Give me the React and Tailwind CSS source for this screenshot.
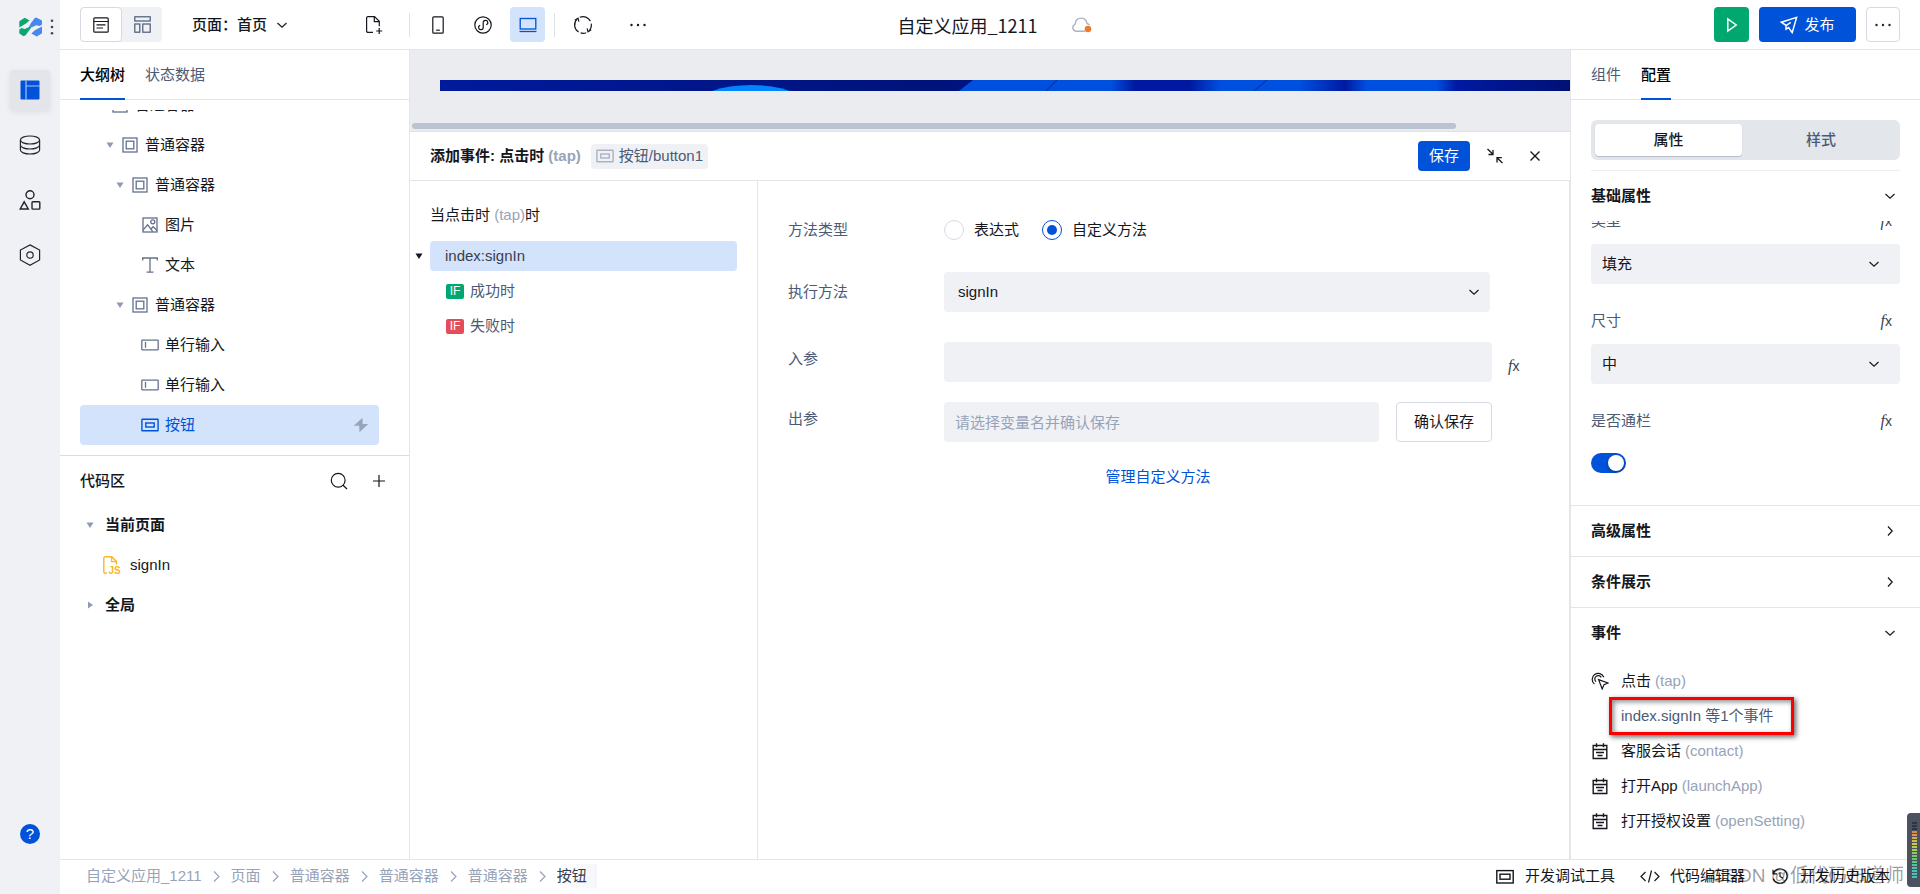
import React, { useState } from 'react';
import clsx from 'clsx';

/* ---------- Icons ---------- */

const Svg = ({ size = 20, w, h, className, children, sw = 1.2 }) => (
    <svg
        width={w || size}
        height={h || size}
        viewBox={`0 0 ${w || size} ${h || size}`}
        fill="none"
        stroke="currentColor"
        strokeWidth={sw}
        className={clsx('shrink-0', className)}
        aria-hidden="true"
    >
        {children}
    </svg>
);

const Chevron = ({ dir = 'down', className }) => (
    <Svg size={12} sw={1.2} className={className}>
        {dir === 'down' ? <path d="M1.5 4 6 8.2 10.5 4" /> : <path d="M4 1.5 8.2 6 4 10.5" />}
    </Svg>
);

const Caret = ({ open = true, className }) => (
    <svg width="8" height="8" viewBox="0 0 8 8" fill="currentColor" className={clsx('shrink-0', className)} aria-hidden="true">
        {open ? <path d="M0.5 1.5h7L4 7z" /> : <path d="M2 0.5v7L7 4z" />}
    </svg>
);

const ContainerIcon = () => (
    <Svg size={18} sw={1.3}>
        <rect x="2" y="2" width="14" height="14" />
        <rect x="5.2" y="5.2" width="7.6" height="7.6" />
    </Svg>
);

const ImageIcon = () => (
    <Svg size={18} sw={1.3}>
        <rect x="2" y="2" width="14" height="14" />
        <circle cx="11.8" cy="5.8" r="2" />
        <path d="M2 14.2 6.6 8.8l5.2 6.8M10.2 12.8l2-2.1 3.8 3.8" />
    </Svg>
);

const TextIcon = () => (
    <Svg size={18} sw={1.3}>
        <path d="M1.7 4.5V2h14.6v2.5M9 2v14M5.5 16.2h7" />
    </Svg>
);

const InputIcon = () => (
    <Svg size={18} sw={1.3}>
        <rect x="0.8" y="4.2" width="16.4" height="9.6" rx="0.5" />
        <path d="M4.5 6v5.8" />
    </Svg>
);

const ButtonIcon = ({ className }) => (
    <Svg size={18} sw={1.4} className={className}>
        <rect x="0.9" y="3.2" width="16.2" height="11.6" rx="0.5" />
        <rect x="4.8" y="7" width="8.4" height="4" />
    </Svg>
);

const MoreIcon = () => (
    <svg width="18" height="18" viewBox="0 0 18 18" fill="currentColor" aria-hidden="true">
        <circle cx="2.5" cy="9" r="1.2" />
        <circle cx="9" cy="9" r="1.2" />
        <circle cx="15.5" cy="9" r="1.2" />
    </svg>
);

const CalendarIcon = () => (
    <Svg size={18} sw={1.4}>
        <path d="M1.5 3.5h15M2.2 3.5v13h13.6v-13M2.2 7.5h13.6M5.5 1.2v4M12.5 1.2v4M5 10.5h8M6.5 13.5h5" />
    </Svg>
);

const TapIcon = () => (
    <Svg size={18} sw={1.2}>
        <path d="M3.4 12A6 6 0 1 1 12.8 5.2M5 9.6A3.4 3.4 0 1 1 10.2 5.4" />
        <path d="M7.6 7.6l9.4 3.4-4 1.6-1.8 4.4z" />
    </Svg>
);

const Fx = ({ className }) => (
    <span className={clsx("font-['Liberation_Serif'] italic leading-6 text-base text-[#3c4250]", className)}>
        f<span className="font-['Liberation_Sans'] not-italic text-sm">x</span>
    </span>
);

/* ---------- Left rail ---------- */

const RailButton = ({ active, label, children }) => (
    <button
        aria-label={label}
        className={clsx(
            'w-10 h-10 rounded flex items-center justify-center text-[#1f242e]',
            active && 'bg-[#e3e5ea] shadow-[0_2px_6px_rgba(0,0,0,0.08)]'
        )}
    >
        {children}
    </button>
);

const Rail = () => (
    <nav className="w-[60px] shrink-0 bg-[#f0f1f5] flex flex-col items-center">
        <div className="w-full h-[54px] pl-[18px] flex items-center gap-[7px]">
            <svg width="25" height="20" viewBox="0 0 25 20" className="shrink-0" aria-hidden="true">
                <path d="M1.3 4.2 6.7 0.8 11.6 3.4 8 6.6 1.3 10.6z" fill="#0aa673" />
                <path d="M1.3 12.6 3.5 11 6.8 11.9 12.2 9.4 14 9.6 7.6 18.2 5.6 19.3 1.3 16.6z" fill="#0aa673" />
                <path d="M12.8 6.2 16.8 0.9 18.2 0.4 24 3.6V7.4L21.8 8.9 18.4 8.2 14.4 9.9 11 10z" fill="#4787f0" />
                <path d="M24 9.4V16.2L18.8 19.6 13.4 16.6 17.2 13z" fill="#4787f0" />
            </svg>
            <svg width="4" height="18" viewBox="0 0 4 18" fill="#3c465a" aria-hidden="true">
                <circle cx="2" cy="2.8" r="1.3" />
                <circle cx="2" cy="9" r="1.3" />
                <circle cx="2" cy="15.2" r="1.3" />
            </svg>
        </div>
        <div className="pt-4 flex flex-col gap-[15px]">
            <RailButton active label="页面">
                <svg width="20" height="20" viewBox="0 0 20 20" aria-hidden="true">
                    <rect x="0.5" y="0.5" width="19" height="19" rx="1" fill="#0052d9" />
                    <path d="M6 0.5v19M6 6h14" stroke="#a9c4f3" strokeWidth="1.2" />
                </svg>
            </RailButton>
            <RailButton label="数据">
                <Svg w={22} h={20}>
                    <ellipse cx="11" cy="5" rx="9.6" ry="4" />
                    <path d="M1.4 5v10c0 2.2 4.3 4 9.6 4s9.6-1.8 9.6-4V5M1.4 10c0 2.2 4.3 4 9.6 4s9.6-1.8 9.6-4" />
                </Svg>
            </RailButton>
            <RailButton label="组件">
                <Svg w={22} h={20} sw={1.4}>
                    <circle cx="11" cy="4.8" r="4" />
                    <path d="M5.2 11.8 9.3 19H1.2z" />
                    <rect x="13" y="11.8" width="7.8" height="7.3" rx="0.8" />
                </Svg>
            </RailButton>
            <RailButton label="设置">
                <Svg size={22}>
                    <path d="M11 0.9 20.6 6v10L11 21.2 1.4 16V6z" />
                    <circle cx="11" cy="11" r="3.2" />
                </Svg>
            </RailButton>
        </div>
        <button className="mt-auto mb-[50px] w-5 h-5 rounded-full bg-[#0052d9] text-white text-[15px] leading-5">?</button>
    </nav>
);

/* ---------- Top bar ---------- */

const TopBar = () => (
    <header className="h-[50px] shrink-0 border-b border-[#e3e5e9] bg-white px-5 grid grid-cols-[1fr_auto_1fr] items-center">
        <div className="flex items-center">
            <div className="flex rounded bg-[#f0f1f5] w-[82px]">
                <button aria-label="大纲" className="w-[42px] h-[35px] rounded border border-[#d5dae5] bg-white flex items-center justify-center">
                    <Svg size={16} sw={1.2}>
                        <rect x="0.8" y="0.8" width="14.4" height="14.4" rx="1" />
                        <path d="M0.8 4.5h14.4M3.5 7.8h9M3.5 11h6.5" />
                    </Svg>
                </button>
                <button aria-label="布局" className="w-10 h-[35px] flex items-center justify-center text-[#4b5b76]">
                    <Svg size={17} sw={1.2}>
                        <rect x="0.8" y="0.8" width="15.4" height="4.2" />
                        <rect x="0.8" y="8" width="5" height="8.2" />
                        <rect x="8.8" y="8" width="7.4" height="8.2" />
                    </Svg>
                </button>
            </div>
            <button className="ml-[30px] w-24 flex items-center justify-between font-medium">
                <span>页面：首页</span>
                <Chevron />
            </button>
            <button aria-label="新建页面" className="ml-[77px]">
                <Svg w={18} h={20} sw={1.2}>
                    <path d="M8 17.4H3a1.4 1.4 0 0 1-1.4-1.4V3A1.4 1.4 0 0 1 3 1.6h6.5l4.8 4.6v5M9.3 1.6v5h5M14.2 13v6M11.2 16h6" />
                </Svg>
            </button>
            <div className="ml-[26px] w-px h-6 bg-[#dfe2e8]" />
            <div className="flex items-center ml-2.5 gap-2.5">
                <button aria-label="手机" className="w-[35px] h-[35px] flex items-center justify-center">
                    <Svg w={12} h={18} sw={1.2}>
                        <rect x="0.8" y="0.8" width="10.4" height="16.4" rx="1" />
                        <path d="M4.2 14.2h3.6" />
                    </Svg>
                </button>
                <button aria-label="小程序" className="w-[35px] h-[35px] flex items-center justify-center">
                    <Svg size={18} sw={1.2}>
                        <circle cx="9" cy="9" r="8.2" />
                        <path d="M9.2 6.4v5a2.3 2.3 0 1 1-3-2.2M9.2 6.6a2.3 2.3 0 1 1 3 2.2" />
                    </Svg>
                </button>
                <button aria-label="桌面" className="w-[35px] h-[35px] rounded bg-[#d4e3fc] text-[#0052d9] flex items-center justify-center">
                    <Svg w={18} h={16} sw={1.3}>
                        <rect x="1.2" y="1.5" width="15.6" height="10.5" />
                        <path d="M0.5 14.5h17" />
                    </Svg>
                </button>
            </div>
            <div className="ml-[9px] w-px h-6 bg-[#dfe2e8]" />
            <button aria-label="刷新" className="ml-[18px]">
                <Svg size={20} sw={1.2}>
                    <path d="M5.6 17.1A8.3 8.3 0 0 1 4 4.2M6.8 2.3a8.3 8.3 0 0 1 10.6 3.8M18.2 8.6a8.3 8.3 0 0 1-2.2 7.2M13.2 17.7a8.3 8.3 0 0 1-5.6.2" />
                    <path d="M1.8 5.2 5 3.2l.9 3.4M18.2 14.8l-3.2 2-.9-3.4" />
                </Svg>
            </button>
            <button aria-label="更多" className="ml-9">
                <MoreIcon />
            </button>
        </div>

        <div className="pl-[9px] flex items-center gap-[34px]">
            <h1 className="text-lg leading-6 font-['Noto_Sans_CJK_SC',sans-serif]">自定义应用_1211</h1>
            <svg width="20" height="18" viewBox="0 0 20 18" fill="none" aria-label="未同步" role="img">
                <path
                    d="M13 15.2H4.2A3.6 3.6 0 0 1 3 8.3c.4-3.8 2.6-6.2 6-6.2s5.4 2.2 6 5.4c1 .2 2 .8 2.4 1.6"
                    stroke="#a9b3c6"
                    strokeWidth="1.4"
                />
                <circle cx="16" cy="13" r="3.3" fill="#ed7b2f" />
            </svg>
        </div>

        <div className="flex items-center justify-end gap-2.5 text-white">
            <button aria-label="预览" className="w-[35px] h-[35px] rounded bg-[#00a870] flex items-center justify-center">
                <Svg w={12} h={16} sw={1.5}>
                    <path d="M1.8 2v12l8.4-6z" />
                </Svg>
            </button>
            <button className="w-[97px] h-[35px] rounded bg-[#0052d9] flex items-center justify-center gap-1.5">
                <Svg size={18} sw={1.5}>
                    <path d="M16.6 1.4 1.4 6.2l4.6 3.2v3.8l2.6-1.6 3.6 5zM6 9.6l4.8-3.2" />
                </Svg>
                发布
            </button>
            <button aria-label="更多操作" className="w-[34px] h-[35px] rounded border border-[#d5dae5] text-[#1f242e] flex items-center justify-center">
                <MoreIcon />
            </button>
        </div>
    </header>
);

/* ---------- Left panel ---------- */

const TREE = [
    { label: '普通容器', icon: ContainerIcon, indent: 'pl-4', caret: true },
    { label: '普通容器', icon: ContainerIcon, indent: 'pl-[26px]', caret: true },
    { label: '普通容器', icon: ContainerIcon, indent: 'pl-9', caret: true },
    { label: '图片', icon: ImageIcon, indent: 'pl-[46px]' },
    { label: '文本', icon: TextIcon, indent: 'pl-[46px]' },
    { label: '普通容器', icon: ContainerIcon, indent: 'pl-9', caret: true },
    { label: '单行输入', icon: InputIcon, indent: 'pl-[46px]' },
    { label: '单行输入', icon: InputIcon, indent: 'pl-[46px]' },
    { label: '按钮', icon: ButtonIcon, indent: 'pl-[46px]', active: true },
];

const Tab = ({ active, children }) => (
    <button
        className={clsx(
            'h-[50px] pt-0.5 border-b-2',
            active ? 'border-[#0052d9] font-medium text-black' : 'border-transparent text-[#4b5b76]'
        )}
    >
        {children}
    </button>
);

const LeftPanel = () => (
    <aside className="w-[350px] shrink-0 border-r border-[#e3e5e9] flex flex-col">
        <div className="h-[50px] px-5 flex gap-5 shadow-[inset_0_-1px_0_#e3e5e9]">
            <Tab active>大纲树</Tab>
            <Tab>状态数据</Tab>
        </div>
        <ul className="mt-2.5 mb-2.5 h-[335px] pl-5 pr-[30px] overflow-hidden flex flex-col justify-end">
            {TREE.map(({ label, icon: Icon, indent, caret, active }, i) => (
                <li key={i}>
                    <button
                        className={clsx(
                            'w-full h-10 pr-2.5 rounded flex items-center text-left',
                            indent,
                            active && 'bg-[#d4e3fc] text-[#0052d9]'
                        )}
                    >
                        <span className="w-[15px] text-[#8e9bb3]">{caret && <Caret />}</span>
                        <span className={active ? 'text-[#0052d9]' : 'text-[#63718c]'}>
                            <Icon />
                        </span>
                        <span className="ml-1.5">{label}</span>
                        {active && (
                            <svg width="16" height="16" viewBox="0 0 16 16" fill="#98a4ba" className="ml-auto" aria-hidden="true">
                                <path d="M9.5 0.8 0.8 8.8h5.4L6.5 15.2 15.2 7H9.6z" />
                            </svg>
                        )}
                    </button>
                </li>
            ))}
        </ul>
        <div className="border-t border-[#d8dbe2] h-[50px] pl-5 pr-[23px] flex items-center">
            <h2 className="font-medium">代码区</h2>
            <button aria-label="搜索" className="ml-auto">
                <Svg size={18} sw={1.2}>
                    <circle cx="8.2" cy="8.2" r="6.9" />
                    <path d="M13 13.2l4 3.8" />
                </Svg>
            </button>
            <button aria-label="新增" className="ml-6">
                <Svg size={14} sw={1.2}>
                    <path d="M7 1v12M1 7h12" />
                </Svg>
            </button>
        </div>
        <ul className="pl-[26px]">
            <li className="h-10 flex items-center font-bold">
                <Caret className="text-[#8e9bb3] mr-[11px]" />
                当前页面
            </li>
            <li className="h-10 pl-4 flex items-center">
                <svg width="19" height="20" viewBox="0 0 19 20" fill="none" className="mr-[9px]" aria-hidden="true">
                    <path d="M5 18.2H3.2a1.4 1.4 0 0 1-1.4-1.4V3.2a1.4 1.4 0 0 1 1.4-1.4h6.6l4.6 4.6v3M9.6 1.8v4.8h4.8" stroke="#fbb62b" strokeWidth="1.4" />
                    <text x="6.5" y="18.8" fontSize="10" fontFamily="Liberation Sans" fontWeight="bold" fill="#fbb62b">JS</text>
                </svg>
                signIn
            </li>
            <li className="h-10 flex items-center font-bold">
                <Caret open={false} className="text-[#8e9bb3] mr-[11px]" />
                全局
            </li>
        </ul>
    </aside>
);

/* ---------- Canvas + event editor ---------- */

const Canvas = () => (
    <div className="h-[82px] shrink-0 bg-[#ebecf0] border-b border-[#dfe1e6] pt-[30px] flex flex-col">
        <svg viewBox="0 0 1130 11" preserveAspectRatio="none" className="ml-[30px] h-[11px]" aria-hidden="true">
            <defs>
                <linearGradient id="banner" gradientUnits="userSpaceOnUse" x1="0" y1="0" x2="1130" y2="0">
                    <stop offset="0" stopColor="#001a9c" />
                    <stop offset="0.44" stopColor="#00137a" />
                    <stop offset="0.6" stopColor="#0019a0" />
                    <stop offset="0.9" stopColor="#0019a0" />
                    <stop offset="1" stopColor="#001175" />
                </linearGradient>
                <linearGradient id="beamA" gradientUnits="userSpaceOnUse" x1="520" y1="0" x2="695" y2="0">
                    <stop offset="0.86" stopColor="#0050e0" />
                    <stop offset="1" stopColor="#0050e0" stopOpacity="0" />
                </linearGradient>
                <linearGradient id="beamB" gradientUnits="userSpaceOnUse" x1="750" y1="0" x2="906" y2="4">
                    <stop offset="0" stopColor="#0050e0" stopOpacity="0" />
                    <stop offset="0.2" stopColor="#0050e0" />
                    <stop offset="0.7" stopColor="#0050e0" />
                    <stop offset="1" stopColor="#0050e0" stopOpacity="0" />
                </linearGradient>
                <linearGradient id="beamC" gradientUnits="userSpaceOnUse" x1="905" y1="0" x2="1016" y2="4">
                    <stop offset="0" stopColor="#0050e0" stopOpacity="0" />
                    <stop offset="0.2" stopColor="#0050e0" />
                    <stop offset="0.82" stopColor="#0050e0" />
                    <stop offset="1" stopColor="#0050e0" stopOpacity="0" />
                </linearGradient>
            </defs>
            <rect width="1130" height="11" fill="url(#banner)" />
            <ellipse cx="311" cy="25" rx="54" ry="20" fill="#0084ff" />
            <path d="M533 0H695V11H519z" fill="url(#beamA)" />
            <rect x="750" width="156" height="11" fill="url(#beamB)" />
            <rect x="905" width="111" height="11" fill="url(#beamC)" />
            <path d="M617 0 606 11M827 0 814 11" stroke="#0036b0" strokeWidth="1.2" />
        </svg>
        <div className="mt-8 ml-0.5 h-1.5 w-[90%] rounded-full bg-[#bac3d0]" />
    </div>
);

const EventFlow = () => (
    <div className="w-[348px] shrink-0 border-r border-[#e3e5e9] pt-5 pr-5">
        <p className="h-7 pl-5 leading-[28px]">
            当点击时 <span className="text-[#97a3b9]">(tap)</span>时
        </p>
        <div className="mt-3 flex items-center">
            <Caret className="ml-[5px] mr-[7px]" />
            <button className="flex-1 h-[30px] rounded bg-[#d4e3fc] text-[#383f4c] pl-[15px] text-left">index:signIn</button>
        </div>
        {[
            ['成功时', 'bg-[#00a870]'],
            ['失败时', 'bg-[#e34d59]'],
        ].map(([text, color]) => (
            <div key={text} className="mt-[5px] h-[30px] pl-9 flex items-center gap-1.5 text-[#4b5b76]">
                <span className={clsx('w-[18px] h-[15px] rounded-xs text-white text-xs leading-[15px] text-center', color)}>IF</span>
                {text}
            </div>
        ))}
    </div>
);

const radioClass =
    'appearance-none w-5 h-5 shrink-0 rounded-full border border-[#d5dae5] checked:border-[#0052d9] flex items-center justify-center checked:before:w-2.5 checked:before:h-2.5 checked:before:rounded-full checked:before:bg-[#0052d9]';

const labelClass = 'w-[156px] shrink-0 text-[#4b5b76]';

const MethodForm = () => {
    const [type, setType] = useState('custom');

    return (
        <form className="flex-1 min-w-0 border-r border-[#e3e5e9] pt-[37px] pl-[30px] pr-[77px]" onSubmit={(e) => e.preventDefault()}>
            <fieldset className="flex items-center h-6">
                <legend className="contents">
                    <span className={labelClass}>方法类型</span>
                </legend>
                <label className="flex items-center gap-2.5 mr-[23px]">
                    <input type="radio" name="type" className={radioClass} checked={type === 'expr'} onChange={() => setType('expr')} />
                    表达式
                </label>
                <label className="flex items-center gap-2.5">
                    <input type="radio" name="type" className={radioClass} checked={type === 'custom'} onChange={() => setType('custom')} />
                    自定义方法
                </label>
            </fieldset>

            <div className="mt-[30px] flex items-center">
                <label htmlFor="method" className={labelClass}>执行方法</label>
                <div className="relative flex-1 mr-0.5">
                    <select id="method" className="appearance-none w-full h-10 rounded bg-[#f0f1f5] px-3.5">
                        <option>signIn</option>
                    </select>
                    <Chevron className="absolute right-2.5 top-3.5 pointer-events-none" />
                </div>
            </div>

            <div className="mt-[30px] flex items-start">
                <label htmlFor="inParam" className={clsx(labelClass, 'mt-[5px]')}>入参</label>
                <input id="inParam" className="flex-1 min-w-0 h-10 rounded bg-[#f0f1f5] px-3" />
                <Fx className="w-4 ml-4 -mr-8 mt-3" />
            </div>

            <div className="mt-5 flex items-start">
                <label htmlFor="outParam" className={clsx(labelClass, 'mt-[5px]')}>出参</label>
                <input
                    id="outParam"
                    placeholder="请选择变量名并确认保存"
                    className="flex-1 min-w-0 h-10 rounded bg-[#f0f1f5] px-[11px] placeholder:text-[#97a3b9]"
                />
                <button className="ml-[17px] w-24 h-10 rounded border border-[#d5dae5]">确认保存</button>
            </div>

            <div className="mt-[23px] pl-9 text-center">
                <a href="#methods" className="text-[#0052d9]">管理自定义方法</a>
            </div>
        </form>
    );
};

const Center = () => (
    <main className="flex-1 min-w-0 flex flex-col">
        <Canvas />
        <div className="h-[49px] shrink-0 border-b border-[#e3e5e9] px-5 flex items-center">
            <h2 className="font-bold">
                添加事件: 点击时 <span className="text-[#97a3b9]">(tap)</span>
            </h2>
            <span className="ml-2.5 h-[25px] px-[5px] rounded bg-[#f0f1f5] text-[#4b5b76] flex items-center gap-[5px]">
                <ButtonIcon className="text-[#a9b3c6]" />
                按钮/button1
            </span>
            <button className="ml-auto w-[52px] h-[30px] rounded bg-[#0052d9] text-white">保存</button>
            <button aria-label="收起" className="ml-4">
                <Svg size={18} sw={1.3}>
                    <path d="M1.5 2 7 7.2M7 3v4.5H2.5M16.5 16 11 10.8M11 15.5V10.6h4.8" />
                </Svg>
            </button>
            <button aria-label="关闭" className="ml-6 mr-2">
                <Svg size={14} sw={1.4}>
                    <path d="M2.5 2.5l9 9M11.5 2.5l-9 9" />
                </Svg>
            </button>
        </div>
        <div className="flex-1 min-h-0 flex">
            <EventFlow />
            <MethodForm />
        </div>
    </main>
);

/* ---------- Right panel ---------- */

const PropSelect = ({ id, label, value }) => (
    <div className="mb-[25px]">
        <div className="h-6 mb-[11px] flex justify-between pr-2">
            <label htmlFor={id} className="text-[#4b5b76]">{label}</label>
            <Fx />
        </div>
        <div className="relative">
            <select id={id} className="appearance-none w-full h-10 rounded bg-[#f0f1f5] px-[11px]">
                <option>{value}</option>
            </select>
            <Chevron className="absolute right-5 top-3.5 pointer-events-none" />
        </div>
    </div>
);

const SectionHead = ({ title, dir }) => (
    <button className="w-full h-[50px] px-5 flex items-center justify-between font-bold">
        {title}
        <Chevron dir={dir} className="mr-1" />
    </button>
);

const EventRow = ({ icon, name, code }) => (
    <li className="h-[35px] flex items-center">
        <span className="mr-3">{icon}</span>
        {name}
        <span className="ml-1 text-[#97a3b9]">({code})</span>
    </li>
);

const RightPanel = () => {
    const [full, setFull] = useState(true);

    return (
        <aside className="w-[350px] shrink-0 border-l border-[#e3e5e9] flex flex-col">
            <div className="h-[50px] px-5 flex gap-5 shadow-[inset_0_-1px_0_#e3e5e9]">
                <Tab>组件</Tab>
                <Tab active>配置</Tab>
            </div>
            <div className="mx-5 mt-5 h-10 py-1 pl-1 rounded-md bg-[#e3e6eb] flex">
                <button className="w-[147px] rounded-sm bg-white font-medium shadow-[0_1px_1px_#b4bccb]">属性</button>
                <button className="flex-1 text-[#4b5b76] font-medium">样式</button>
            </div>
            <div className="mx-5 mt-2.5 border-t border-[#eceef2]" />
            <SectionHead title="基础属性" />
            <div className="h-[284px] px-5 pb-8 overflow-hidden flex flex-col justify-end">
                <PropSelect id="kind" label="类型" value="填充" />
                <PropSelect id="size" label="尺寸" value="中" />
                <div className="h-6 flex justify-between pr-2">
                    <label htmlFor="full" className="text-[#4b5b76]">是否通栏</label>
                    <Fx />
                </div>
                <input
                    id="full"
                    type="checkbox"
                    role="switch"
                    checked={full}
                    onChange={() => setFull(!full)}
                    className="appearance-none mt-5 shrink-0 w-[35px] h-5 p-0.5 rounded-full bg-[#c5cbd6] checked:bg-[#0052d9] flex checked:justify-end before:w-4 before:h-4 before:rounded-full before:bg-white before:shadow-[0_1px_3px_rgba(0,0,0,0.4)]"
                />
            </div>
            <div className="border-t border-[#e3e5e9]">
                <SectionHead title="高级属性" dir="right" />
            </div>
            <div className="border-t border-[#e3e5e9]">
                <SectionHead title="条件展示" dir="right" />
            </div>
            <div className="border-t border-[#e3e5e9]">
                <SectionHead title="事件" />
            </div>
            <ul className="pt-[5px] pl-5">
                <EventRow icon={<TapIcon />} name="点击" code="tap" />
                <li className="relative h-[35px] pl-[30px] flex items-center text-[#4b5b76]">
                    index.signIn 等1个事件
                    <span className="absolute left-[18px] -top-px w-[185px] h-[38px] border-3 border-[#fb0000] shadow-[2px_2px_5px_rgba(0,0,0,0.6),inset_2px_2px_5px_rgba(0,0,0,0.45)]" />
                </li>
                <EventRow icon={<CalendarIcon />} name="客服会话" code="contact" />
                <EventRow icon={<CalendarIcon />} name="打开App" code="launchApp" />
                <EventRow icon={<CalendarIcon />} name="打开授权设置" code="openSetting" />
            </ul>
        </aside>
    );
};

/* ---------- Bottom bar ---------- */

const CRUMBS = ['自定义应用_1211', '页面', '普通容器', '普通容器', '普通容器'];

const BottomBar = () => (
    <footer className="h-[35px] shrink-0 border-t border-[#e3e5e9] pl-[26px] pr-[30px] pb-0.5 flex items-center justify-between">
        <nav className="flex items-center gap-2.5 text-[#97a3b9]">
            {CRUMBS.map((crumb, i) => (
                <React.Fragment key={i}>
                    <a href="#crumb">{crumb}</a>
                    <Svg w={9} h={12} sw={1.2}>
                        <path d="M2 1.5 7 6.5 2 11.5" />
                    </Svg>
                </React.Fragment>
            ))}
            <span className="pr-2.5 bg-gradient-to-l from-[#f5f6f9] to-white text-[#383f4c]">按钮</span>
        </nav>
        <div className="flex items-center gap-[25px]">
            <button className="flex items-center gap-2.5">
                <Svg size={20} sw={1.4}>
                    <rect x="1.8" y="4.6" width="16.4" height="12.4" />
                    <rect x="5" y="8.2" width="10" height="5" />
                </Svg>
                开发调试工具
            </button>
            <button className="flex items-center gap-2.5">
                <Svg size={20} sw={1.2}>
                    <path d="M5.5 6 1 10.5 5.5 15M14.5 6l4.5 4.5-4.5 4.5M11.5 4.5l-3 12" />
                </Svg>
                代码编辑器
            </button>
            <button className="flex items-center gap-2.5">
                <Svg size={20} sw={1.2}>
                    <path d="M3.2 7.5a7.2 7.2 0 1 1 0 5M3 3.8v4h4M10 6.5v4l3 1.8" />
                </Svg>
                开发历史版本
            </button>
        </div>
    </footer>
);

const METER = [
    'bg-[#30343f]', 'bg-[#30343f]', 'bg-[#30343f]', 'bg-[#d98a52]', 'bg-[#d99a50]', 'bg-[#d6ab4e]', 'bg-[#d3ba4c]',
    'bg-[#ccc94c]', 'bg-[#bccb50]', 'bg-[#a6cb56]', 'bg-[#8fc95c]', 'bg-[#7ac864]', 'bg-[#68c772]', 'bg-[#5cc684]',
    'bg-[#52c596]', 'bg-[#4cc4a6]', 'bg-[#48c2b2]', 'bg-[#48c2b2]', 'bg-[#48c2b2]',
];

const App = () => (
    <div className="relative h-screen flex overflow-hidden bg-white text-[15px] leading-6 text-[#14171d] font-['Liberation_Sans','Noto_Sans_CJK_SC',sans-serif]">
        <Rail />
        <div className="flex-1 min-w-0 flex flex-col">
            <TopBar />
            <div className="flex-1 min-h-0 flex">
                <LeftPanel />
                <Center />
                <RightPanel />
            </div>
            <BottomBar />
        </div>

        <div className="absolute right-4 bottom-1.5 text-[19px] leading-6 text-black/40 pointer-events-none">CSDN @低代码布道师</div>
        <div className="absolute right-0 bottom-[7px] w-[13px] h-[74px] rounded-l bg-[#4c5261] pl-[5px] pr-[3px] py-[9px] flex flex-col gap-px">
            {METER.map((color, i) => (
                <span key={i} className={clsx('h-0.5 shrink-0', color)} />
            ))}
        </div>
    </div>
);

export default App;
